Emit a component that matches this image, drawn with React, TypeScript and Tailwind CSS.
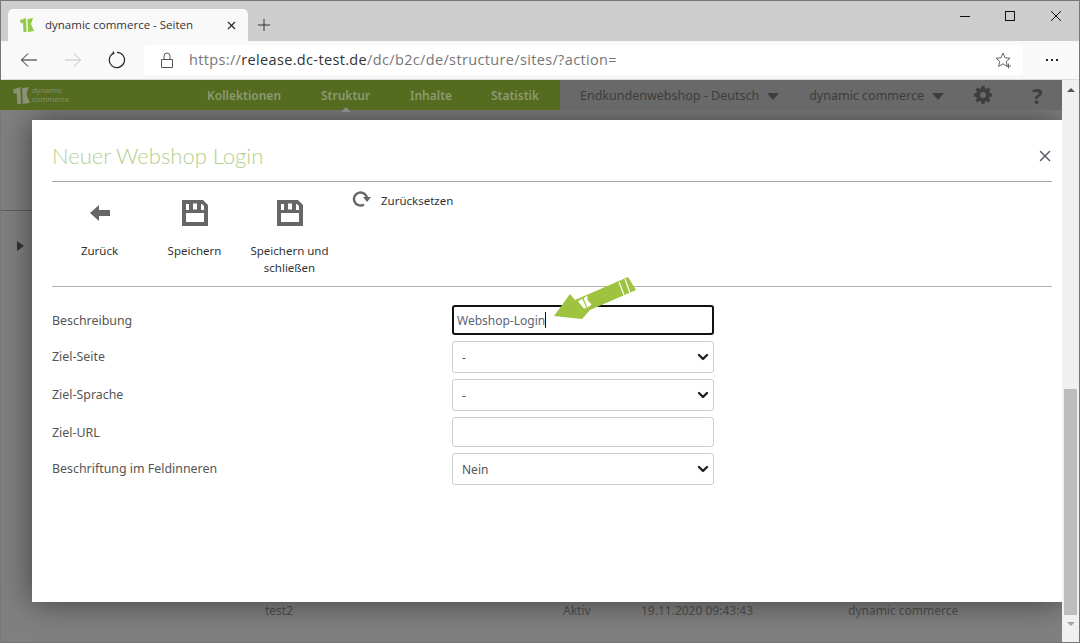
import { ChevronDown, X } from 'lucide-react'

const FONT = "font-['Noto_Sans',sans-serif]"

function LogoMark({ size, className }: { size: number; className: string }) {
  return (
    <svg width={size} height={size} viewBox="0 0 14 14" className={className}>
      <path d="M0 2l6-2 .6 14H3.500L3 5 .8 5.500zM7.500 1L13 0l-2 6 3 7-6 1z" />
    </svg>
  )
}

function SaveIcon() {
  return (
    <svg width="28" height="28" viewBox="0 0 28 28" className="fill-[#666666]">
      <path fillRule="evenodd" d="M1 1h21l5 5v21H1zM5 5v6h3V5zM12 4.500v6h4v-6zM20 5v6h3V7l-2-2zM5 14v9h18v-9z" />
    </svg>
  )
}

function ToolButton({ label, icon }: { label: React.ReactNode; icon: React.ReactNode }) {
  return (
    <div className="w-[95px] flex flex-col items-center text-center text-[11.5px] leading-[17px] text-[#333]">
      <div className="h-[28px] mb-[15px] flex items-center">{icon}</div>
      {label}
    </div>
  )
}

function FormRow({ label, className, labelClass, children }: { label: string; className?: string; labelClass?: string; children: React.ReactNode }) {
  return (
    <div className={`flex items-center h-[32px] ${className ?? ''}`}>
      <div className={`w-[400px] text-[12.4px] text-[#555] ${labelClass ?? ''}`}>{label}</div>
      {children}
    </div>
  )
}

function SelectBox({ value }: { value: string }) {
  return (
    <div className="w-[262px] h-[32px] border border-[#cccccc] rounded-[3px] flex items-center justify-between pl-[9px] pr-[2px] text-[12px] text-[#555]">
      <span className="pt-[2px]">{value}</span>
      <ChevronDown size={16} strokeWidth={3.6} className="text-[#222]" />
    </div>
  )
}

export default function App() {
  return (
    <div className={`relative w-[1080px] h-[643px] overflow-hidden flex flex-col bg-[#808080] ${FONT}`}>
      {/* browser tab strip */}
      <div className="h-[41px] shrink-0 bg-[#cdcdcd] border-t border-[#7b7b7b] flex items-end pl-[8px]">
        <div className="w-[240px] h-[32px] bg-[#f9f9f9] rounded-t-[5px] flex items-center pl-[12px] pr-[10px]">
          <LogoMark size={14} className="fill-[#94c94a]" />
          <span className="ml-[11px] text-[11.5px] font-['Open_Sans',sans-serif] text-[#333] flex-1">dynamic commerce - Seiten</span>
          <X size={13} strokeWidth={2} className="text-[#222]" />
        </div>
        <svg width="14" height="14" viewBox="0 0 14 14" className="ml-[9px] mb-[9px] stroke-[#333]" fill="none">
          <path d="M7 1v12M1 7h12" />
        </svg>
        <div className="ml-auto h-full flex items-center pb-[11px]">
          <svg width="12" height="12" viewBox="0 0 12 12" className="mr-[33px] stroke-[#111]" fill="none"><path d="M1 6.500h10" /></svg>
          <svg width="12" height="12" viewBox="0 0 12 12" className="mr-[34px] stroke-[#111]" fill="none"><rect x="1.500" y="1.500" width="9" height="9" /></svg>
          <svg width="12" height="12" viewBox="0 0 12 12" className="mr-[18px] stroke-[#111]" fill="none"><path d="M1 1l10 10M11 1L1 11" /></svg>
        </div>
      </div>

      {/* browser toolbar */}
      <div className="h-[39px] shrink-0 bg-[#f9f9f9] border-b border-[#dddddd] flex items-center pl-[20px]">
        <svg width="18" height="16" viewBox="0 0 18 16" fill="none" className="stroke-[#222]"><path d="M17 8H1.500M8 1.500L1.500 8 8 14.500" /></svg>
        <svg width="18" height="16" viewBox="0 0 18 16" fill="none" className="ml-[26px] stroke-[#c4c4c4]"><path d="M1 8h15.500M10 1.500L16.500 8 10 14.500" /></svg>
        <svg width="18" height="18" viewBox="0 0 18 18" fill="none" className="ml-[26px] stroke-[#222]"><path d="M5.500 2.200A7.600 7.600 0 1 0 9 1.400M5 .5l.8 2.200-2.300.6" strokeWidth="1.200" /></svg>
        <div className="ml-[18px] w-[879px] h-[30px] bg-white rounded-[4px] flex items-center pl-[16px] pr-[11px]">
          <svg width="14" height="17" viewBox="0 0 14 17" fill="none" className="stroke-[#555]"><path d="M1.500 7.500h11v8h-11zM4 7.500V4a3 3 0 0 1 6 0v3.500" /></svg>
          <span className="ml-[15px] text-[14.5px] tracking-[0.35px] font-['Open_Sans',sans-serif] text-[#767676]">
            https://<span className="text-[#333]">release.dc-test.de</span>/dc/b2c/de/structure/sites/?action=
          </span>
          <svg width="17" height="17" viewBox="0 0 17 17" fill="none" className="ml-auto stroke-[#666]"><path d="M8 1l2 4.800 5 .4-3.800 3.300 1.200 5L8 11.800 3.600 14.500l1.200-5L1 6.200l5-.4zM13.500 11.500v5M11 14h5" /></svg>
        </div>
        <div className="ml-[23px] flex gap-[3px]">
          <span className="w-[2px] h-[2px] bg-[#222]" />
          <span className="w-[2px] h-[2px] bg-[#222]" />
          <span className="w-[2px] h-[2px] bg-[#222]" />
        </div>
      </div>

      {/* dimmed page */}
      <div className="flex-1 relative min-h-0">
        <div className="relative z-10 h-[30px] flex text-[12px] font-semibold mr-[18px]">
          <div className="w-[560px] bg-[#556b1f] flex items-center pt-[2px] text-[#8d9a72]">
            <div className="w-[207px] pl-[13px] -mt-[2px] flex items-center gap-[2px]">
              <LogoMark size={17} className="fill-[#8b9178]" />
              <span className="text-[7.5px] leading-[9px] font-normal text-[#858f6c]">dynamic<br />commerce</span>
            </div>
            <span className="w-[114px]">Kollektionen</span>
            <span className="relative w-[89px]">
              Struktur
              <span className="absolute left-[20px] top-[20px] border-x-[5px] border-x-transparent border-b-[5px] border-b-[#8a8a8a]" />
            </span>
            <span className="w-[81px]">Inhalte</span>
            <span>Statistik</span>
          </div>
          <div className="flex-1 bg-[#696969] flex items-center pt-[2px] pl-[20px] text-[12.5px] font-normal text-[#3d3d3d]">
            <span>Endkundenwebshop - Deutsch</span>
            <span className="ml-[8px] border-x-[6px] border-x-transparent border-t-[7px] border-t-[#3d3d3d]" />
            <span className="ml-[30px]">dynamic commerce</span>
            <span className="ml-[8px] border-x-[6px] border-x-transparent border-t-[7px] border-t-[#3d3d3d]" />
            <svg width="18" height="18" viewBox="0 0 18 18" className="ml-[30px] -mt-[2px] fill-[#3d3d3d]">
              <path fillRule="evenodd" d="M7.500 0h3l.4 2.300 1.700.7L14.500 1.600l2 2-1.400 1.900.7 1.700 2.200.3v3l-2.300.4-.7 1.700 1.400 1.900-2 2-1.900-1.400-1.700.7-.3 2.200h-3l-.4-2.300-1.700-.7-1.900 1.400-2-2 1.400-1.900-.7-1.700L0 10.500v-3l2.300-.4.7-1.700L1.600 3.500l2-2L5.500 3l1.700-.7zM9 6a3 3 0 1 0 0 6 3 3 0 0 0 0-6z" />
            </svg>
            <span className="ml-[40px] -mt-[2px] text-[22px] font-bold leading-none">?</span>
          </div>
        </div>
        <div className="absolute left-[17px] top-[161px] border-y-[5px] border-y-transparent border-l-[7px] border-l-[#333]" />
        <div className="absolute left-0 w-[32px] top-[130px] border-t border-[#5c5c5c]" />
        <div className="absolute left-0 top-[88px] w-[1px] h-[22px] bg-[#3f5580]" />
        <div className="absolute inset-x-0 top-[522px] text-[12px] text-[#4f4f4f]">
          <span className="absolute left-[265px] top-0">test2</span>
          <span className="absolute left-[563px] top-0">Aktiv</span>
          <span className="absolute left-[641px] top-0">19.11.2020 09:43:43</span>
          <span className="absolute left-[848px] top-0">dynamic commerce</span>
        </div>
      </div>

      {/* modal */}
      <div className="absolute left-[32px] top-[120px] w-[1030px] h-[482px] bg-white pl-[20px] pr-[10px] shadow-[0_0_30px_rgba(0,0,0,0.5)]">
        <div className="h-[62px] border-b border-[#a8a8a8] flex items-center justify-between pt-[10px]">
          <h1 className="text-[22px] font-light font-['Lato',sans-serif] text-[#b3cf8f]">Neuer Webshop Login</h1>
          <X size={18} strokeWidth={2} className="text-[#5a6068] -mr-[2px]" />
        </div>
        <div className="h-[105px] border-b border-[#b0b0b0] flex pt-[17px]">
          <ToolButton
            label="Zurück"
            icon={
              <svg width="20" height="18" viewBox="0 0 20 18" className="fill-[#666666]"><path d="M0 9l9-8v5h11v6H9v5z" /></svg>
            }
          />
          <ToolButton label="Speichern" icon={<SaveIcon />} />
          <ToolButton label={<>Speichern und<br />schließen</>} icon={<SaveIcon />} />
          <div className="ml-[15px] -mt-[7px] flex items-start text-[11.5px] text-[#333]">
            <svg width="20" height="16" viewBox="0 0 20 16" fill="none" className="mt-[-1px]">
              <path d="M15 8A6.500 6.500 0 1 0 12 13.500" stroke="#666" strokeWidth="2.400" />
              <path d="M11 6h8l-4 5z" fill="#666" />
            </svg>
            <span className="ml-[9px] leading-[17px]">Zurücksetzen</span>
          </div>
        </div>

        <div className="relative pt-[17px]">
          <FormRow label="Beschreibung" className="mb-[5px]" labelClass="mt-[2px]">
            <div className="w-[262px] h-[30px] border-2 border-[#111] rounded-[3px] flex items-center pl-[3px] text-[12px] text-[#5b6478]">
              <span className="pt-[2px]">Webshop-Login</span><span className="w-px h-[16px] bg-[#111]" />
            </div>
          </FormRow>
          <FormRow label="Ziel-Seite" className="mb-[6px]"><SelectBox value="-" /></FormRow>
          <FormRow label="Ziel-Sprache" className="mb-[5px]"><SelectBox value="-" /></FormRow>
          <FormRow label="Ziel-URL" className="mb-[5px]" labelClass="mt-[2px]">
            <div className="w-[262px] h-[30px] border border-[#cccccc] rounded-[3px]" />
          </FormRow>
          <FormRow label="Beschriftung im Feldinneren"><SelectBox value="Nein" /></FormRow>

          {/* arrow annotation */}
          <svg width="90" height="50" viewBox="0 0 90 50" className="absolute left-[498px] -top-[12px]">
            <path d="M4 41L20 19l5 6L78 2l8 13-46 20-8 9z" fill="#9ec33f" />
            <path d="M69 7l5 13M75 4l5 14" stroke="#ffffff" strokeWidth="1.200" />
            <g transform="rotate(-22 35 28)">
              <path d="M29 24l5-1 .5 10h-2.500zM35.500 23l4.500-1-1.500 4 2 6-5 1z" fill="#ffffff" />
            </g>
          </svg>
        </div>
      </div>

      {/* page scrollbar */}
      <div className="absolute right-[1px] top-[80px] bottom-0 w-[17px] bg-[#f0f0f0] flex flex-col items-center">
        <span className="mt-[8px] border-x-[4px] border-x-transparent border-b-[4px] border-b-[#555]" />
        <div className="mt-auto w-[13px] h-[226px] bg-[#bdbdbd]" />
        <span className="mt-[7px] mb-[17px] border-x-[4px] border-x-transparent border-t-[4px] border-t-[#a3a3a3]" />
      </div>

      {/* window frame */}
      <div className="absolute inset-0 border border-[#777777] pointer-events-none" />
    </div>
  )
}
